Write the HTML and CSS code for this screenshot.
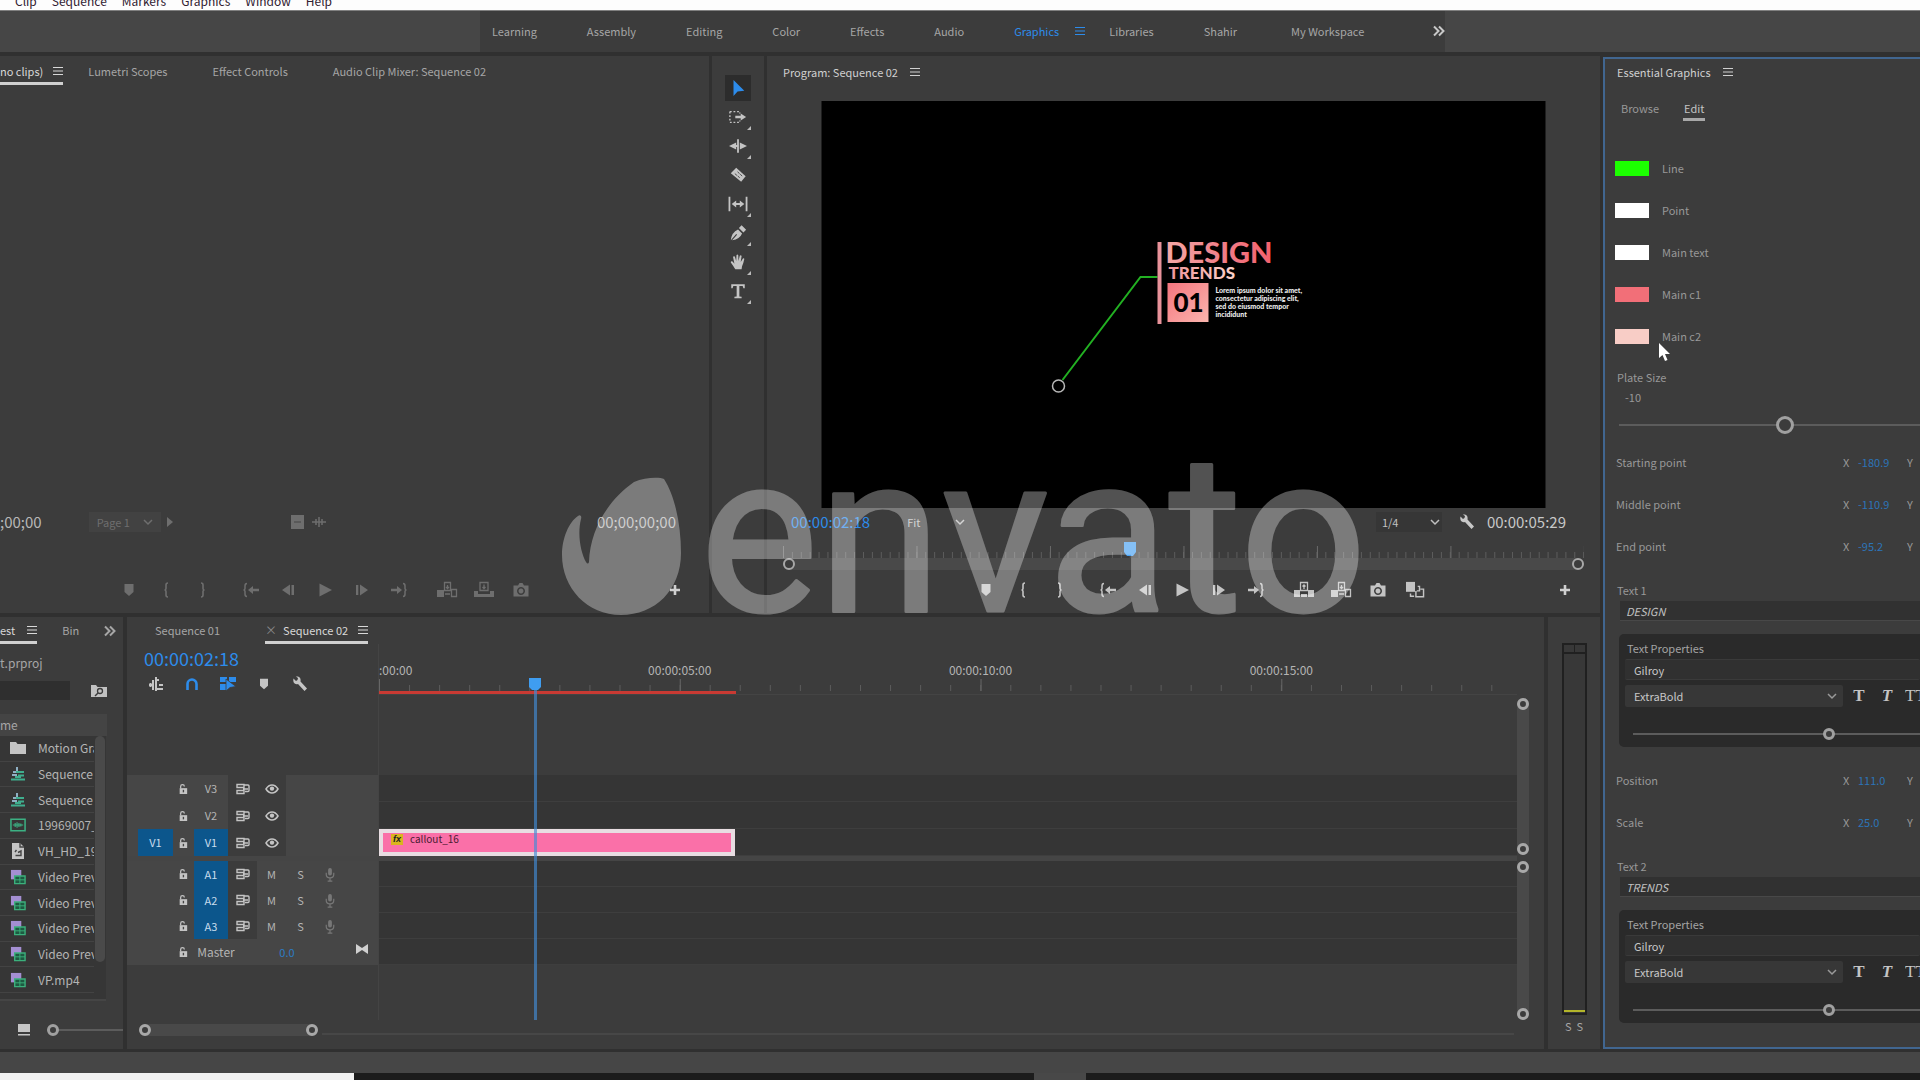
FILE: index.html
```html
<!DOCTYPE html>
<html lang="en">
<head>
<meta charset="utf-8">
<title>Video editor</title>
<link rel="stylesheet" href="styles.css">
</head>
<body>
<svg class="defs" aria-hidden="true">
  <symbol id="menu" viewBox="0 0 10 10"><path d="M0 1.5h10M0 5h10M0 8.5h10" stroke="currentColor" stroke-width="1.2"/></symbol>
  <symbol id="more" viewBox="0 0 12 12"><path d="M1 1.5 5.5 6 1 10.500M6 1.500 10.500 6 6 10.500" fill="none" stroke="currentColor" stroke-width="2"/></symbol>
  <symbol id="chev" viewBox="0 0 10 10"><path d="M1 3l4 4 4-4" fill="none" stroke="currentColor" stroke-width="1.500"/></symbol>
  <symbol id="marker" viewBox="0 0 18 18"><path d="M4.500 3h9v8L9 15l-4.500-4z" fill="currentColor"/></symbol>
  <symbol id="in" viewBox="0 0 18 18"><path d="M11 2Q9 2 9 4v3.500Q9 9 7.500 9 9 9 9 10.500V14q0 2 2 2" fill="none" stroke="currentColor" stroke-width="1.600"/></symbol>
  <symbol id="out" viewBox="0 0 18 18"><path d="M7 2q2 0 2 2v3.500Q9 9 10.500 9 9 9 9 10.500V14q0 2-2 2" fill="none" stroke="currentColor" stroke-width="1.600"/></symbol>
  <symbol id="goin" viewBox="0 0 18 18"><path d="M5 2.500Q3 2.500 3 5v2.500Q3 9 1.500 9 3 9 3 10.500V13q0 2.500 2 2.500" fill="none" stroke="currentColor" stroke-width="1.500"/><path d="M6 9l5-4v2.800h6v2.400h-6V13z" fill="currentColor"/></symbol>
  <symbol id="goout" viewBox="0 0 18 18"><path d="M13 2.500q2 0 2 2.500v2.500Q15 9 16.500 9 15 9 15 10.500V13q0 2.500-2 2.500" fill="none" stroke="currentColor" stroke-width="1.500"/><path d="M12 9L7 5v2.800H1v2.400h6V13z" fill="currentColor"/></symbol>
  <symbol id="back" viewBox="0 0 18 18"><path d="M11 3.500v11L3 9zM12.500 4H15v10h-2.500z" fill="currentColor"/></symbol>
  <symbol id="play" viewBox="0 0 18 18"><path d="M3.500 2.500 16 9 3.500 15.500z" fill="currentColor"/></symbol>
  <symbol id="fwd" viewBox="0 0 18 18"><path d="M7 3.500v11L15 9zM3 4h2.300v10H3z" fill="currentColor"/></symbol>
  <symbol id="lift" viewBox="0 0 22 18"><path d="M1 9h6v7H1zM15 9h6v7h-6zM8 13h6v3H8z" fill="currentColor"/><path d="M7.500 1.500h7v8h-7zM11 4v4M9.500 5.500 11 4l1.500 1.500" fill="none" stroke="currentColor" stroke-width="1.300"/></symbol>
  <symbol id="insert" viewBox="0 0 22 18"><path d="M1 9h7v7H1z" fill="currentColor"/><path d="M8.500 1.500h6v8h-6zM15.500 8.500h5v7h-5zM11.500 4v3.500M10 6l1.500 1.500L13 6M9 13h5" fill="none" stroke="currentColor" stroke-width="1.300"/></symbol>
  <symbol id="over" viewBox="0 0 22 18"><path d="M1 10h4v3h12v-3h4v6H1z" fill="currentColor"/><path d="M7 1.500h8v8H7zM11 3.500v4M9.500 6 11 7.500 12.500 6" fill="none" stroke="currentColor" stroke-width="1.300"/></symbol>
  <symbol id="camera" viewBox="0 0 18 18"><path fill-rule="evenodd" d="M1.500 4.500H6l1.500-2.500h3L12 4.500h4.500v11h-15zM9 6a4 4 0 1 0 .01 0zM9 7.500a2.500 2.500 0 1 1-.01 0z" fill="currentColor"/></symbol>
  <symbol id="compare" viewBox="0 0 22 20"><path d="M1 1h10v11H1z" fill="currentColor"/><path d="M14 6h2v5h-3M12 11v6.500h8.500V9H17M6 14v3h4" fill="none" stroke="currentColor" stroke-width="1.600"/></symbol>
  <symbol id="plus" viewBox="0 0 12 12"><path d="M6 1v10M1 6h10" stroke="currentColor" stroke-width="2.600"/></symbol>
  <symbol id="wrench" viewBox="0 0 16 16"><path d="M1.500 2.500 4 5l1.500-1L6 2 3.800.500C7 0 9.300 2 8.500 5.500L15 12.500 12.500 15 6 8C3 9 .500 6.500 1.500 2.500z" fill="currentColor"/></symbol>
  <symbol id="lock" viewBox="0 0 12 14"><path d="M2 6h9v7H2z" fill="currentColor"/><path d="M3.200 6V4a2.200 2.200 0 0 1 4.400 0" fill="none" stroke="currentColor" stroke-width="1.500"/><path d="M6.500 8v3" stroke="#444" stroke-width="1.600"/></symbol>
  <symbol id="sync" viewBox="0 0 14 12"><path d="M1 1.500h7v3H1zM1 7.500h7v3H1zM8.500 2H12q1 0 1 1v4.500q0 1-1 1H9M7 6h5" fill="none" stroke="currentColor" stroke-width="1.400"/></symbol>
  <symbol id="eye" viewBox="0 0 14 10"><path d="M1 5q2.500-4 6-4t6 4q-2.500 4-6 4T1 5z" fill="none" stroke="currentColor" stroke-width="1.500"/><circle cx="7" cy="4.600" r="2.200" fill="currentColor"/></symbol>
  <symbol id="mic" viewBox="0 0 12 16"><rect x="4" y="1" width="4" height="8" rx="2" fill="currentColor"/><path d="M2 6v2q0 3.500 4 3.500T10 8V6M6 12v3M3.500 15h5" fill="none" stroke="currentColor" stroke-width="1.300"/></symbol>
  <symbol id="folder" viewBox="0 0 16 14"><path d="M0 1h6l1.500 2H16v10H0z" fill="currentColor"/></symbol>
  <symbol id="seq" viewBox="0 0 16 14"><path d="M7 0v4M3 5h7M2 8h5" stroke="#8fb0c4" stroke-width="2"/><path d="M6 5h8M8 8.500h6M1 12.500h14M5 10h6" stroke="#3fae8e" stroke-width="2"/></symbol>
  <symbol id="audio" viewBox="0 0 17 14"><path d="M1 1h15v12H1z" fill="none" stroke="#3cb183" stroke-width="1.600"/><path d="M3 7h11M5.500 5v4M7.500 4v6M9.500 5v4M11.500 5.500v3" stroke="#3cb183" stroke-width="1.200"/></symbol>
  <symbol id="file" viewBox="0 0 14 16"><path d="M1 0h8l4 4v12H1z" fill="#c4c4c4"/><path d="M9 0v4h4M4 9l1.500-2M4.500 12.500H10V8L7 9.500" fill="none" stroke="#444" stroke-width="1.400"/></symbol>
  <symbol id="video" viewBox="0 0 17 17"><path d="M1 1h11v10H1z" fill="#a48fd2"/><path d="M5 7.500h11v8H5z" fill="#1e5a42" stroke="#3bb07c" stroke-width="1.500"/><path d="M5 11.500h11M10.500 8v7" stroke="#3bb07c"/></symbol>
</svg>

<nav class="menubar"><a href="#">Clip</a><a href="#">Sequence</a><a href="#">Markers</a><a href="#">Graphics</a><a href="#">Window</a><a href="#">Help</a></nav>

<header class="workspaces">
  <nav class="ws-tabs">
    <a href="#">Learning</a><a href="#">Assembly</a><a href="#">Editing</a><a href="#">Color</a><a href="#">Effects</a><a href="#">Audio</a>
    <a href="#" class="on">Graphics <svg class="i10"><use href="#menu"/></svg></a>
    <a href="#">Libraries</a><a href="#">Shahir</a><a href="#" class="custom">My Workspace</a>
    <button class="ws-more" aria-label="More workspaces"><svg class="i12"><use href="#more"/></svg></button>
  </nav>
</header>

<main class="main">
  <div class="work">
    <div class="upper">
      <section class="panel source">
        <nav class="tabs">
          <a href="#" class="on">no clips) <svg class="i10"><use href="#menu"/></svg></a>
          <a href="#">Lumetri Scopes</a><a href="#">Effect Controls</a><a href="#">Audio Clip Mixer: Sequence 02</a>
        </nav>
        <div class="monitor-empty"></div>
        <div class="info dim">
          <span class="tc">;00;00</span>
          <button class="page">Page 1 <svg class="i10"><use href="#chev"/></svg></button>
          <svg class="page-next" viewBox="0 0 6 10"><path d="M0 0l6 5-6 5z" fill="currentColor"/></svg>
          <svg class="drag" viewBox="0 0 36 16"><path d="M0 1h13v14H0z" fill="currentColor"/><path d="M3 8h7" stroke="#444"/><path d="M21 8h14M25 5v6M28 3v10M31 5v6" stroke="currentColor" stroke-width="1.500"/></svg>
          <span class="tc end">00;00;00;00</span>
        </div>
        <div class="transport dim">
          <div class="grp"><button aria-label="Marker"><svg><use href="#marker"/></svg></button><button aria-label="Mark in"><svg><use href="#in"/></svg></button><button aria-label="Mark out"><svg><use href="#out"/></svg></button></div>
          <div class="grp"><button aria-label="Go to in"><svg><use href="#goin"/></svg></button><button aria-label="Step back"><svg><use href="#back"/></svg></button><button aria-label="Play"><svg><use href="#play"/></svg></button><button aria-label="Step forward"><svg><use href="#fwd"/></svg></button><button aria-label="Go to out"><svg><use href="#goout"/></svg></button></div>
          <div class="grp"><button aria-label="Insert"><svg class="wide"><use href="#insert"/></svg></button><button aria-label="Overwrite"><svg class="wide"><use href="#over"/></svg></button><button aria-label="Export frame"><svg><use href="#camera"/></svg></button></div>
          <button class="add" aria-label="Button editor"><svg class="i12"><use href="#plus"/></svg></button>
        </div>
      </section>

      <section class="panel tools">
        <button class="on" aria-label="Selection"><svg viewBox="0 0 20 20"><path d="M5 1v18l4.500-5 7.500-1z" fill="#2d8ceb"/></svg></button>
        <button class="sub" aria-label="Track select"><svg viewBox="0 0 20 20"><path d="M7 8.500h6V6l6 4-6 4v-2.500H7z" fill="currentColor"/><path d="M1 4h11v2M1 4v12h11v-2" fill="none" stroke="currentColor" stroke-width="1.500" stroke-dasharray="2 2"/></svg></button>
        <button class="sub" aria-label="Ripple edit"><svg viewBox="0 0 20 20"><path d="M9 2.500h2v15H9zM8 6v3H11v2H8v3L0 10zM12 6l8 4-8 4z" fill="currentColor"/></svg></button>
        <button aria-label="Razor"><svg viewBox="0 0 20 20"><path d="M8 2l10.500 9.500-5 6L2 8z" fill="currentColor"/><path d="M6.500 8.500l6 5M9.500 6.500l5.500 5" stroke="#3c3c3c" stroke-dasharray="3 1"/></svg></button>
        <button class="sub" aria-label="Slip"><svg viewBox="0 0 22 20"><path d="M1.500 2v16M20.500 2v16" stroke="currentColor" stroke-width="2"/><path d="M4 10l5-4v3h4V6l5 4-5 4v-3H9v3z" fill="currentColor"/></svg></button>
        <button class="sub" aria-label="Pen"><svg viewBox="0 0 20 20"><path d="M2 18Q3 9 10 6l4.500 4.500Q12 17 3.500 18l5.500-6-1-1zM11 4.500l3-3 5 5-3 3z" fill="currentColor"/></svg></button>
        <button class="sub" aria-label="Hand"><svg viewBox="0 0 20 20"><path d="M7 18Q4 13 2 10.500q0-2 2-1L6 12 4.500 4.500q.5-1.500 2-.5L8 9l.3-6.500q1-1.500 2 0L10.500 9 12 3q1.300-1 2 .3L13 10l2.500-4q1.500-.6 1.500.8-1 5-2.500 8L14 18z" fill="currentColor"/></svg></button>
        <button class="sub" aria-label="Type"><svg viewBox="0 0 20 20"><path d="M2.500 2.500h15V7H16l-.8-2.500h-3.700V16l2.500.5V18H6v-1.500l2.500-.5V4.500H4.800L4 7H2.500z" fill="currentColor"/></svg></button>
      </section>

      <section class="panel program">
        <h2 class="title">Program: Sequence 02 <svg class="i10"><use href="#menu"/></svg></h2>
        <svg class="video" viewBox="0 0 724 407">
          <defs>
            <linearGradient id="g1"><stop offset="0" stop-color="#f5a9a6"/><stop offset=".5" stop-color="#f0808a"/><stop offset="1" stop-color="#f4606c"/></linearGradient>
            <linearGradient id="g2"><stop offset="0" stop-color="#f0959a"/><stop offset="1" stop-color="#fbd3cb"/></linearGradient>
            <linearGradient id="g3" x2="1" y2="1"><stop offset="0" stop-color="#f4757e"/><stop offset="1" stop-color="#fbb5ae"/></linearGradient>
          </defs>
          <rect width="724" height="407"/>
          <path d="M241 279l78-103h17" fill="none" stroke="#22b022" stroke-width="2"/>
          <circle cx="237" cy="285" r="6" fill="none" stroke="#b8b8b8" stroke-width="1.500"/>
          <rect x="336" y="141" width="4" height="82" fill="#e8929a"/>
          <text x="344" y="162" class="v-design" fill="url(#g1)">DESIGN</text>
          <text x="347" y="178" class="v-trends" fill="url(#g2)">TRENDS</text>
          <rect x="346" y="182" width="41" height="39" fill="url(#g3)"/>
          <text x="367" y="211" class="v-num" text-anchor="middle">01</text>
          <g class="v-body"><text x="394" y="192">Lorem ipsum dolor sit amet,</text><text x="394" y="200">consectetur adipiscing elit,</text><text x="394" y="208">sed do eiusmod tempor</text><text x="394" y="216">incididunt</text></g>
        </svg>
        <div class="info">
          <span class="tc blue">00:00:02:18</span>
          <button class="fit">Fit <svg class="i10"><use href="#chev"/></svg></button>
          <button class="res">1/4 <svg class="i10"><use href="#chev"/></svg></button>
          <svg class="i16"><use href="#wrench"/></svg>
          <span class="tc">00:00:05:29</span>
        </div>
        <div class="scrub"><div class="scrub-ticks"></div><div class="hbar"></div><svg class="scrub-head" viewBox="0 0 12 14"><path d="M0 0h12v10l-3 4H3l-3-4z" fill="#4ba3f2"/></svg></div>
        <div class="transport">
          <div class="grp"><button aria-label="Marker"><svg><use href="#marker"/></svg></button><button aria-label="Mark in"><svg><use href="#in"/></svg></button><button aria-label="Mark out"><svg><use href="#out"/></svg></button></div>
          <div class="grp"><button aria-label="Go to in"><svg><use href="#goin"/></svg></button><button aria-label="Step back"><svg><use href="#back"/></svg></button><button aria-label="Play"><svg><use href="#play"/></svg></button><button aria-label="Step forward"><svg><use href="#fwd"/></svg></button><button aria-label="Go to out"><svg><use href="#goout"/></svg></button></div>
          <div class="grp"><button aria-label="Lift"><svg class="wide"><use href="#lift"/></svg></button><button aria-label="Extract"><svg class="wide"><use href="#insert"/></svg></button><button aria-label="Export frame"><svg><use href="#camera"/></svg></button><button aria-label="Comparison view"><svg class="wide"><use href="#compare"/></svg></button></div>
          <button class="add" aria-label="Button editor"><svg class="i12"><use href="#plus"/></svg></button>
        </div>
      </section>
    </div>

    <div class="lower">
      <section class="panel project">
        <nav class="tabs"><a href="#" class="on">est <svg class="i10"><use href="#menu"/></svg></a><a href="#">Bin</a><button aria-label="More tabs"><svg class="i12"><use href="#more"/></svg></button></nav>
        <div class="proj-name">t.prproj</div>
        <div class="search"><input type="text" aria-label="Search"><svg viewBox="0 0 16 14"><path d="M0 1h5l1.500 2H16v10H0z" fill="#c2c2c2"/><circle cx="9" cy="7" r="2.500" fill="none" stroke="#3c3c3c" stroke-width="1.300"/><path d="M7 9l-3 3" stroke="#3c3c3c" stroke-width="1.500"/></svg></div>
        <div class="list-head">me</div>
        <div class="list">
          <ul>
            <li><svg><use href="#folder"/></svg><span>Motion Graphics</span></li>
            <li><svg><use href="#seq"/></svg><span>Sequence 01</span></li>
            <li><svg><use href="#seq"/></svg><span>Sequence 02</span></li>
            <li><svg><use href="#audio"/></svg><span>19969007_</span></li>
            <li><svg><use href="#file"/></svg><span>VH_HD_19</span></li>
            <li><svg><use href="#video"/></svg><span>Video Preview</span></li>
            <li><svg><use href="#video"/></svg><span>Video Preview</span></li>
            <li><svg><use href="#video"/></svg><span>Video Preview</span></li>
            <li><svg><use href="#video"/></svg><span>Video Preview</span></li>
            <li><svg><use href="#video"/></svg><span>VP.mp4</span></li>
          </ul>
          <div class="list-thumb"></div>
        </div>
        <div class="proj-foot"><svg viewBox="0 0 12 12"><path d="M0 0h12v8H0zM0 10h12v1.500H0z" fill="#c6c6c6"/></svg><input type="range" class="small" aria-label="Icon size" value="0"></div>
      </section>

      <section class="panel timeline">
        <nav class="tabs"><a href="#">Sequence 01</a><a href="#" class="on"><small>×</small>Sequence 02 <svg class="i10"><use href="#menu"/></svg></a></nav>
        <div class="tl-body">
          <div class="heads">
            <div class="tl-tc">00:00:02:18</div>
            <div class="tl-tools">
              <button aria-label="Nest"><svg viewBox="0 0 16 16"><path d="M8 1v14M5 4v10M11 4H8M11 9h4M8 13h7M1 9h4M2.500 7v4" stroke="currentColor" stroke-width="2" fill="none"/></svg></button>
              <button class="blue" aria-label="Snap"><svg viewBox="0 0 16 16"><path d="M3.500 14V8a4.500 4.500 0 0 1 9 0v6" stroke="currentColor" stroke-width="2.600" fill="none"/></svg></button>
              <button class="blue" aria-label="Linked selection"><svg viewBox="0 0 16 16"><path d="M0 1h7v5H0zM9 1h7v5H9zM0 8h7v6H0z" fill="currentColor"/><path d="M6 3v12l4-3.500 6-1z" fill="currentColor" stroke="#3c3c3c" stroke-width=".8"/></svg></button>
              <button aria-label="Add marker"><svg><use href="#marker"/></svg></button>
              <button aria-label="Settings"><svg><use href="#wrench"/></svg></button>
            </div>
            <div class="tracks-head">
              <div class="th v"><b></b><svg class="lk"><use href="#lock"/></svg><span>V3</span><i><svg><use href="#sync"/></svg></i><i><svg><use href="#eye"/></svg></i></div>
              <div class="th v"><b></b><svg class="lk"><use href="#lock"/></svg><span>V2</span><i><svg><use href="#sync"/></svg></i><i><svg><use href="#eye"/></svg></i></div>
              <div class="th v"><b class="sel">V1</b><svg class="lk"><use href="#lock"/></svg><span class="sel">V1</span><i><svg><use href="#sync"/></svg></i><i><svg><use href="#eye"/></svg></i></div>
              <div class="split"></div>
              <div class="th a"><b></b><svg class="lk"><use href="#lock"/></svg><span class="sel">A1</span><i><svg><use href="#sync"/></svg></i><em>M</em><em>S</em><em><svg><use href="#mic"/></svg></em></div>
              <div class="th a"><b></b><svg class="lk"><use href="#lock"/></svg><span class="sel">A2</span><i><svg><use href="#sync"/></svg></i><em>M</em><em>S</em><em><svg><use href="#mic"/></svg></em></div>
              <div class="th a"><b></b><svg class="lk"><use href="#lock"/></svg><span class="sel">A3</span><i><svg><use href="#sync"/></svg></i><em>M</em><em>S</em><em><svg><use href="#mic"/></svg></em></div>
              <div class="th m"><b></b><svg class="lk"><use href="#lock"/></svg><span class="master">Master</span><span class="blue">0.0</span><svg class="bow" viewBox="0 0 12 10"><path d="M0 0l6 4 6-4v10L6 6l-6 4z" fill="currentColor"/></svg></div>
            </div>
          </div>
          <div class="lanes">
            <div class="ruler">
              <span class="first">:00:00</span><span class="t5">00:00:05:00</span><span class="t10">00:00:10:00</span><span class="t15">00:00:15:00</span>
            </div>
            <div class="render"></div>
            <div class="lane-gap"></div>
            <div class="lane v"></div><div class="lane v"></div>
            <div class="lane v"><div class="clip"><b>fx</b>callout_16</div></div>
            <div class="split"></div>
            <div class="lane a"></div><div class="lane a"></div><div class="lane a"></div><div class="lane a"></div>
            <div class="playhead"><svg viewBox="0 0 12 12"><path d="M0 0h12v9l-3 3H3L0 9z" fill="#3f9df0"/></svg></div>
          </div>
          <div class="vscroll"><div class="vbar top"></div><div class="vbar bottom"></div></div>
        </div>
        <div class="tl-foot"><div class="hbar"></div><div class="rest"></div></div>
      </section>

      <section class="panel meter">
        <div class="meter-box"><div class="clipcells"><i></i><i></i></div><div class="level"></div></div>
        <div class="solo"><button>S</button><button>S</button></div>
      </section>
    </div>
  </div>

  <aside class="panel eg">
    <h2 class="title">Essential Graphics <svg class="i10"><use href="#menu"/></svg></h2>
    <nav class="eg-tabs"><a href="#">Browse</a><a href="#" class="on">Edit</a></nav>
    <div class="swatches">
      <div><button class="sw line" id="s1" aria-label="Line color"></button><label for="s1">Line</label></div>
      <div><button class="sw white" id="s2" aria-label="Point color"></button><label for="s2">Point</label></div>
      <div><button class="sw white" id="s3" aria-label="Main text color"></button><label for="s3">Main text</label></div>
      <div><button class="sw c1" id="s4" aria-label="Main c1 color"></button><label for="s4">Main c1</label></div>
      <div><button class="sw c2" id="s5" aria-label="Main c2 color"></button><label for="s5">Main c2</label>
        <svg class="cursor" viewBox="0 0 12 19"><path d="M1 0v15l3.500-3 2.500 6 2.500-1-2.500-6H12z" fill="#fff"/></svg></div>
    </div>
    <div class="plate"><label for="plate">Plate Size</label><output for="plate">-10</output><input type="range" id="plate" min="0" max="1000" value="555"></div>
    <div class="row"><span>Starting point</span><i>X</i><a href="#">-180.9</a><i>Y</i></div>
    <div class="row"><span>Middle point</span><i>X</i><a href="#">-110.9</a><i>Y</i></div>
    <div class="row"><span>End point</span><i>X</i><a href="#">-95.2</a><i>Y</i></div>
    <div class="text-sec">
      <label for="t1">Text 1</label><input type="text" id="t1" value="DESIGN">
      <div class="props">
        <div class="props-title">Text Properties</div>
        <select class="family" aria-label="Font"><option>Gilroy</option></select>
        <div class="style"><div class="pick"><select aria-label="Font style"><option>ExtraBold</option></select><svg class="i10"><use href="#chev"/></svg></div><button class="tb">T</button><button class="ti">T</button><button class="tt">TT</button></div>
        <input type="range" class="small" aria-label="Font size" min="0" max="100" value="69">
      </div>
      <div class="row"><span>Position</span><i>X</i><a href="#">111.0</a><i>Y</i></div>
      <div class="row"><span>Scale</span><i>X</i><a href="#">25.0</a><i>Y</i></div>
    </div>
    <div class="text-sec">
      <label for="t2">Text 2</label><input type="text" id="t2" value="TRENDS">
      <div class="props">
        <div class="props-title">Text Properties</div>
        <select class="family" aria-label="Font"><option>Gilroy</option></select>
        <div class="style"><div class="pick"><select aria-label="Font style"><option>ExtraBold</option></select><svg class="i10"><use href="#chev"/></svg></div><button class="tb">T</button><button class="ti">T</button><button class="tt">TT</button></div>
        <input type="range" class="small" aria-label="Font size" min="0" max="100" value="69">
      </div>
    </div>
  </aside>
</main>

<div class="statusbar"></div>
<footer class="taskbar"><div class="task-search"></div><div class="task-app"></div><span>1:37 PM</span></footer>

<svg class="watermark" viewBox="0 0 1920 1080">
  <g fill="#fff" opacity=".32">
    <path d="M664 479C675 496 681 525 681 553C681 590 655 615 621 615C587 615 562 588 562 555C562 538 569 522 578 516C580 514 582 516 581 519C577 535 581 553 586 562Q588 565 589 562C590 530 608 500 634 482C645 477 660 477 664 479Z"/>
    <text x="700" y="611">envato</text>
  </g>
</svg>
</body>
</html>
```

FILE: styles.css
```css
*, *::before, *::after { box-sizing: border-box; }
body {
  margin: 0;
  height: 100vh;
  display: flex;
  flex-direction: column;
  overflow: hidden;
  background: #303030;
  color: #a6a6a6;
  font: 11px/20px "Noto Sans CJK SC", "Noto Sans", sans-serif;
}
a { color: inherit; text-decoration: none; }
button { border: 0; padding: 0; background: none; color: inherit; font: inherit; }
input, select { font: inherit; color: inherit; border: 0; margin: 0; padding: 0; min-width: 0; }
h2 { margin: 0; font-weight: 400; font-size: 11px; }
ul { margin: 0; padding: 0; list-style: none; }
svg { flex: none; display: block; }
.defs { position: absolute; width: 0; height: 0; }
.i10 { width: 10px; height: 10px; }
.i12 { width: 12px; height: 12px; }
.i16 { width: 16px; height: 16px; }
.blue { color: #2d8ceb; }

/* top bars */
.menubar { height: 10px; flex: none; background: #fdfdfd; color: #302030; display: flex; align-items: flex-end; gap: 15px; padding-left: 15px; overflow: hidden; font-size: 12px; line-height: 18px; }
.workspaces { height: 42px; flex: none; background: #464646; border-top: 1px solid #808080; padding-left: 25%; display: flex; }
.ws-tabs { width: 67%; display: flex; align-items: center; gap: 50px; background: #3c3c3c; padding: 0 0 2px 12px; white-space: nowrap; }
.ws-tabs a { display: flex; align-items: center; gap: 16px; }
.ws-tabs .on { color: #2d8ceb; margin-right: -26px; }
.ws-tabs .custom { margin-left: 4px; }
.ws-more { color: #c8c8c8; margin-left: auto; }

/* panels */
.main { flex: 1; min-height: 0; display: grid; grid-template-columns: minmax(0, 1fr) 317px; grid-template-rows: minmax(0, 1fr); gap: 3px; padding-top: 4px; }
.work { display: grid; grid-template-rows: minmax(0, 557fr) minmax(0, 435fr); gap: 4px; min-width: 0; }
.upper { display: grid; grid-template-columns: minmax(0, 709fr) 52px minmax(0, 833fr); grid-template-rows: minmax(0, 1fr); gap: 3px; min-height: 0; }
.lower { display: grid; grid-template-columns: 123px minmax(0, 1fr) 52px; grid-template-rows: minmax(0, 1fr); gap: 4px; min-height: 0; padding-bottom: 3px; }
.panel { background: #3c3c3c; min-width: 0; min-height: 0; display: flex; flex-direction: column; overflow: hidden; }
.tabs { display: flex; gap: 45px; height: 29px; flex: none; }
.tabs a { display: flex; align-items: center; gap: 10px; white-space: nowrap; height: 100%; padding-top: 4px; border-bottom: 3px solid transparent; }
.lower .tabs { height: 27px; }
.lower .tabs a { padding-top: 2px; }
.tabs .on { color: #d8d8d8; border-color: #d0d0d0; }
.title { display: flex; align-items: center; gap: 12px; color: #d0d0d0; height: 32px; flex: none; }
.dim { color: #6e6e6e; }
.tc { font-size: 15px; color: #b8b8b8; }
.tc.blue { color: #2d8ceb; }
.info { height: 28px; flex: none; display: flex; align-items: center; }
.transport { display: flex; align-items: center; gap: 11px; height: 28px; flex: none; color: #c4c4c4; }
.transport.dim { color: #6e6e6e; }
.transport svg { width: 18px; height: 18px; margin: 0 auto; }
.transport svg.wide { width: 22px; }
.transport svg.i12 { width: 12px; height: 12px; }
.grp { display: flex; }
.grp button { width: 37px; }
.add { margin-left: auto; color: #d0d0d0; }

.source .tabs a:nth-child(2) { margin-left: -20px; }
.monitor-empty { flex: 1; }
.source .info { margin-bottom: 40px; }
.page { margin-left: 47px; width: 72px; height: 20px; background: #424242; display: flex; align-items: center; justify-content: space-between; padding: 0 8px; }
.page-next { width: 6px; height: 12px; margin-left: 6px; }
.drag { width: 36px; height: 16px; margin-left: 118px; }
.end { margin-left: auto; margin-right: 33px; }
.source .transport { margin-bottom: 9px; padding: 0 28px 0 110px; }

.tools { align-items: center; padding-top: 19px; gap: 3px; color: #c4c4c4; }
.tools button { width: 26px; height: 26px; display: grid; place-items: center; position: relative; }
.tools svg { width: 20px; height: 18px; }
.tools .on { background: #2c2c2c; }
.tools .sub::after { content: ""; position: absolute; right: 0; bottom: 0; border: 2px solid; border-color: transparent #bbb #bbb transparent; }

.program { padding: 0 16px 9px; }
.video { flex: 1; min-height: 0; width: 100%; margin: 13px 0 0; }
.v-design { font: 900 29px Lato, sans-serif; }
.v-trends { font: 900 17px Lato, sans-serif; }
.v-num { font: 900 26px Lato, sans-serif; }
.v-body { font: 900 7px Lato, sans-serif; fill: #eee; }
.program .info { padding: 0 18px 0 8px; }
.fit { margin-left: 37px; width: 58px; display: flex; align-items: center; justify-content: space-between; color: #c0c0c0; }
.res { margin-left: auto; margin-right: 17px; width: 66px; padding: 0 2px 0 6px; background: #363636; display: flex; align-items: center; justify-content: space-between; color: #c0c0c0; }
.program .i16 { margin-right: 12px; color: #c8c8c8; }
.program .info .tc { color: #c8c8c8; }
.program .info .tc.blue { color: #2d8ceb; }
.program .transport { padding: 0 13px 0 23%; }
.scrub { height: 40px; flex: none; position: relative; padding-top: 10px; }
.scrub-ticks {
  height: 12px;
  background:
    linear-gradient(90deg, #6a6a6a 1px, transparent 1px) 0 0 / calc(100% / 6) 12px repeat-x,
    linear-gradient(90deg, #5c5c5c 1px, transparent 1px) 0 6px / calc(100% / 90) 6px repeat-x;
}
.scrub-head { position: absolute; left: 42.6%; top: 6px; width: 12px; height: 14px; }
.hbar { height: 12px; background: #494949; border-radius: 6px; display: flex; justify-content: space-between; }
.hbar::before, .hbar::after, .vbar::before, .vbar::after { content: ""; width: 12px; height: 12px; border: 3px solid #a8a8a8; border-radius: 50%; background: #3c3c3c; }
.scrub .hbar::before, .scrub .hbar::after { border-width: 2px; }

/* project */
.project .tabs { gap: 25px; align-items: center; }
.project .tabs .on { gap: 12px; }
.proj-name { height: 37px; line-height: 37px; flex: none; font-size: 12px; }
.search { display: flex; align-items: center; gap: 21px; }
.search input { width: 70px; height: 19px; background: #2f2f2f; }
.search svg { width: 16px; height: 14px; }
.list-head { margin: 14px 16px 0 0; height: 22px; line-height: 22px; background: #444; flex: none; font-size: 12px; }
.list { flex: 1; margin-right: 17px; background: #363636; display: flex; gap: 1px; border-bottom: 2px solid #454545; min-height: 0; font-size: 12px; }
.list ul { width: 94px; display: grid; grid-template-rows: repeat(10, 1fr); height: 257px; }
.list li { display: flex; align-items: center; gap: 12px; padding-left: 10px; overflow: hidden; white-space: nowrap; border-bottom: 1px solid #434343; color: #b4b4b4; }
.list li svg { width: 16px; height: 16px; color: #c4c4c4; }
.list-thumb { width: 10px; height: 226px; background: #4a4a4a; border-radius: 5px; }
.proj-foot { height: 38px; flex: none; display: flex; align-items: center; padding-left: 18px; margin-top: 10px; gap: 17px; }
.proj-foot svg { width: 12px; height: 12px; }
.proj-foot input { flex: 1; }

/* timeline */
.timeline .tabs { padding-left: 28px; }
.timeline .tabs small { font-size: 12px; color: #888; width: 8px; }
.tl-body { flex: 1; display: grid; grid-template-columns: 251px minmax(0, 1fr) 27px; grid-template-rows: minmax(0, 1fr); min-height: 0; }
.heads { display: flex; flex-direction: column; }
.tl-tc { font-size: 18px; color: #2d8ceb; padding-left: 17px; height: 29px; line-height: 29px; }
.tl-tools { display: flex; gap: 20px; padding-left: 21px; height: 21px; align-items: center; color: #c4c4c4; }
.tl-tools svg { width: 16px; height: 16px; }
.tl-tools .blue { color: #2d8ceb; }
.tracks-head { margin-top: 81px; background: #464646; }
.th { display: flex; align-items: center; color: #b4b4b4; }
.v { height: 27px; }
.a, .m { height: 26px; }
.th b { width: 35px; margin-left: 11px; height: 100%; font-weight: 400; text-align: center; line-height: 26px; }
.th > span { width: 34px; height: 100%; line-height: 26px; text-align: center; }
.th .sel { background: #0c568c; color: #c8dcec; }
.lk { width: 10px; height: 12px; margin: 0 6px 0 5px; color: #c4c4c4; }
.th i, .th em { width: 29px; height: 100%; display: grid; place-items: center; font-style: normal; }
.th i { background: #3c3c3c; }
.th i svg, .th em svg { width: 14px; height: 12px; color: #c4c4c4; }
.th em svg { height: 15px; color: #777; }
.th .master { width: 44px; font-size: 12px; }
.th .blue { margin-left: 36px; width: 26px; color: #2d7cc4; }
.bow { width: 12px; height: 10px; margin: 0 10px 6px auto; color: #d0d0d0; }
.split { height: 5px; background: #454545; flex: none; }
.lanes { position: relative; display: flex; flex-direction: column; border-left: 1px solid #444; }
.ruler {
  position: relative; height: 47px; flex: none; color: #b4b4b4; font-size: 12px;
  background:
    linear-gradient(90deg, #666 1px, transparent 1px) 0 35px / 26.43% 12px repeat-x,
    linear-gradient(90deg, #5c5c5c 1px, transparent 1px) 0 41px / 2.643% 6px repeat-x;
}
.ruler span { position: absolute; top: 16px; transform: translateX(-50%); }
.ruler .first { left: 0; transform: none; }
.t5 { left: 26.43%; }
.t10 { left: 52.86%; }
.t15 { left: 79.29%; }
.render { width: 31.4%; height: 3px; background: #c93a33; flex: none; }
.lane-gap { height: 81px; flex: none; border-top: 1px solid #444; }
.lane { background: #353535; border-bottom: 1px solid #3e3e3e; flex: none; }
.clip { width: 31.3%; height: 27px; border: 4px solid #e8dde2; background: #fa70a8; color: #4a1c32; font-size: 10px; line-height: 12px; display: flex; gap: 7px; padding-left: 8px; }
.clip b { width: 12px; height: 11px; margin-top: 1px; background: #d9b51e; color: #222; font: italic 700 9px/11px "Liberation Sans", sans-serif; text-align: center; }
.playhead { position: absolute; left: 13.7%; top: 34px; bottom: 0; width: 3px; margin-left: -1px; background: rgba(66, 140, 214, .65); }
.playhead svg { width: 12px; height: 12px; margin-left: -5px; }
.vscroll { display: flex; flex-direction: column; gap: 6px; padding: 54px 15px 0 0; }
.vbar { width: 12px; flex: none; background: #494949; border-radius: 6px; display: flex; flex-direction: column; justify-content: space-between; }
.vbar.top { height: 157px; }
.vbar.bottom { height: 159px; }
.tl-foot { height: 20px; margin: 0 30px 9px 12px; display: flex; align-items: center; gap: 4px; flex: none; }
.tl-foot .hbar { width: 179px; }
.rest { flex: 1; border-top: 2px solid #474747; margin-top: 8px; }

.meter { align-items: center; padding: 26px 0 12px; }
.meter-box { flex: 1; width: 25px; border: 2px solid #202020; background: #383838; display: flex; flex-direction: column; justify-content: space-between; }
.clipcells { height: 9px; display: grid; grid-template-columns: 1fr 1fr; border-bottom: 2px solid #202020; }
.clipcells i + i { border-left: 1px solid #202020; }
.level { height: 3px; border-top: 2px solid #b3b52a; }
.solo { display: flex; gap: 5px; line-height: 22px; }

/* essential graphics */
.eg { border: 2px solid #416690; border-right: 0; padding: 0 0 0 10px; margin: 1px 0 3px; color: #989898; }
.eg .title { height: 26px; padding-left: 2px; }
.eg-tabs { display: flex; gap: 23px; padding: 12px 0 0 5px; height: 62px; flex: none; }
.eg-tabs a { height: 24px; line-height: 22px; padding: 0 1px; border-bottom: 3px solid transparent; }
.eg-tabs .on { color: #c4c4c4; border-color: #a8a8a8; }
.swatches > div { height: 42px; display: flex; align-items: center; gap: 13px; position: relative; }
.sw { width: 34px; height: 15px; }
.line { background: #1cff00; }
.white { background: #fff; }
.c1 { background: #f26f78; }
.c2 { background: #f8cdc6; }
.cursor { position: absolute; left: 43px; top: 28px; width: 12px; height: 19px; }
.plate { display: flex; flex-direction: column; padding: 10px 0 7px 2px; flex: none; }
.plate output { padding-left: 8px; height: 28px; }
.plate input { margin-left: 2px; }
.row { height: 42px; display: flex; align-items: center; flex: none; padding: 0 0 2px 1px; }
.row span { flex: 1; }
.row i { font-style: normal; width: 15px; }
.row a { width: 49px; color: #2c74b8; }
.row a + i { width: 13px; }
.text-sec { padding-top: 12px; display: flex; flex-direction: column; flex: none; }
.text-sec > label { padding-left: 2px; height: 21px; }
.text-sec > input { margin-left: 5px; height: 20px; padding-left: 6px; background: #313131; border-bottom: 1px solid #484848; color: #c0c0c0; font-style: italic; }
.props { margin: 13px 0 13px 4px; padding: 4px 0 3px 6px; height: 113px; background: #2a2a2a; border-radius: 5px 0 0 5px; }
.props-title { padding-left: 2px; color: #a4a4a4; }
.props select { appearance: none; display: block; width: 100%; padding-left: 9px; color: #c8c8c8; background: #303030; border-radius: 2px; }
.props .family { height: 21px; margin: 1px 0 5px; border: 1px solid #3a3a3a; border-width: 1px 0; }
.style { display: flex; height: 22px; align-items: center; }
.pick { width: 218px; flex: none; position: relative; }
.props .pick select { height: 22px; background: #373737; }
.pick .i10 { position: absolute; right: 6px; top: 6px; color: #999; }
.style button { font: 700 17px/22px "Liberation Serif", serif; color: #c4c4c4; width: 28px; flex: none; margin-left: 2px; text-align: center; }
.style .ti { font-style: italic; width: 24px; }
.style .tt { font-weight: 400; width: 18px; margin-left: 6px; overflow: hidden; text-align: left; white-space: nowrap; }
.props input { width: calc(100% - 8px); margin: 17px 0 0 8px; }

input[type="range"] { appearance: none; display: block; height: 20px; background: linear-gradient(#5c5c5c, #5c5c5c) center / 100% 2px no-repeat; }
input[type="range"]::-webkit-slider-thumb { appearance: none; box-sizing: border-box; width: 18px; height: 18px; border: 3px solid #a0a0a0; border-radius: 50%; background: #3c3c3c; }
input.small::-webkit-slider-thumb { width: 12px; height: 12px; }

.statusbar { height: 21px; flex: none; background: #464646; }
.taskbar { height: 7px; flex: none; display: flex; background: #1c1c1c; color: #ccc; overflow: hidden; }
.task-search { width: 354px; background: #f2f2f2; }
.task-app { width: 52px; margin-left: 680px; background: #484848; }
.taskbar span { margin: 0 8px 0 auto; line-height: 20px; }

.watermark { position: absolute; inset: 0; width: 100%; height: 100%; pointer-events: none; }
.watermark text { font: 400 223px Roboto, sans-serif; stroke: #fff; stroke-width: 3px; stroke-linejoin: round; }
```
